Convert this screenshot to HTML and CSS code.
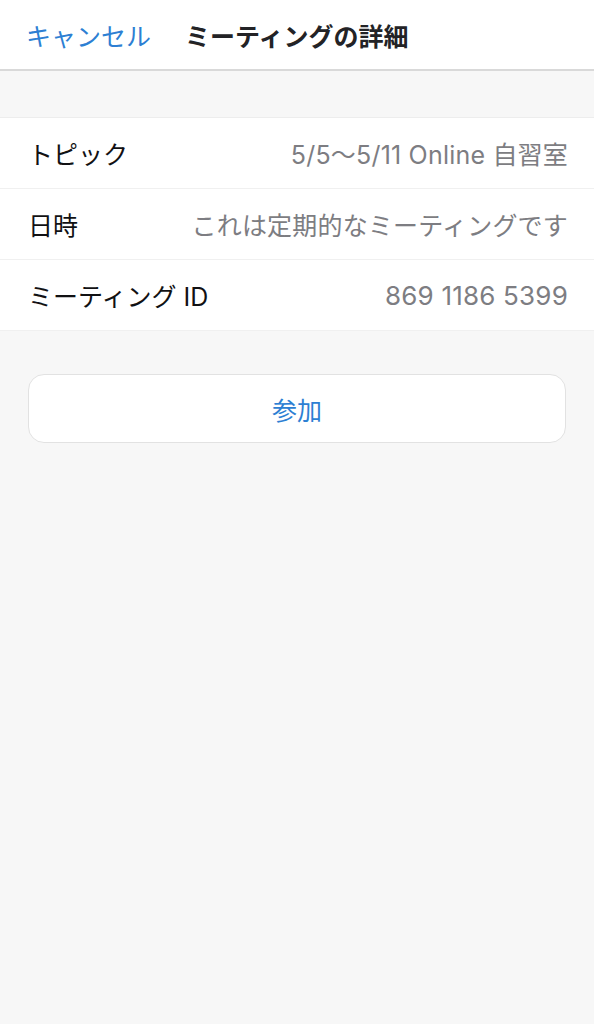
FILE: index.html
```html
<!DOCTYPE html>
<html lang="ja">
<head>
    <meta charset="UTF-8">
    <meta name="viewport" content="width=device-width, initial-scale=1.0">
    <title>ミーティングの詳細</title>
    <link rel="stylesheet" href="styles.css">
</head>
<body>
    <header class="nav-bar">
        <span class="nav-cancel">キャンセル</span>
        <span class="nav-title">ミーティングの詳細</span>
    </header>
    <div class="details">
        <div class="detail-row">
            <span class="detail-label">トピック</span>
            <span class="detail-value">5/5〜5/11 Online 自習室</span>
        </div>
        <div class="detail-row">
            <span class="detail-label">日時</span>
            <span class="detail-value">これは定期的なミーティングです</span>
        </div>
        <div class="detail-row">
            <span class="detail-label">ミーティング ID</span>
            <span class="detail-value id-value">869 1186 5399</span>
        </div>
    </div>
    <button class="join-button">参加</button>
</body>
</html>
```

FILE: styles.css
```css
body {
    margin: 0;
    background-color: #f7f7f7;
    font-family: Inter, "Noto Sans CJK JP", sans-serif;
    font-size: 25px;
    color: #111113;
}
.nav-bar {
    height: 69px;
    background-color: #ffffff;
    border-bottom: 2px solid #d9d9d9;
    display: flex;
    align-items: center;
    gap: 34px;
    padding: 0 26px;
}
.nav-cancel {
    color: #2d7fd3;
}
.nav-title {
    font-weight: bold;
    color: #232326;
}
.details {
    margin-top: 46px;
    background-color: #ffffff;
    border-top: 1px solid #ededed;
}
.detail-row {
    height: 70px;
    display: flex;
    align-items: center;
    justify-content: space-between;
    padding: 0 26px 0 28px;
    border-bottom: 1px solid #f0f0f0;
}
.detail-value {
    color: #7d7d82;
    letter-spacing: 0.2px;
}
.id-value {
    font-size: 26px;
}
.join-button {
    display: block;
    width: 538px;
    height: 69px;
    margin: 43px 0 0 28px;
    background-color: #ffffff;
    border: 1px solid #e2e2e2;
    border-radius: 16px;
    font-family: inherit;
    font-size: 25px;
    color: #2d7fd3;
}
```
